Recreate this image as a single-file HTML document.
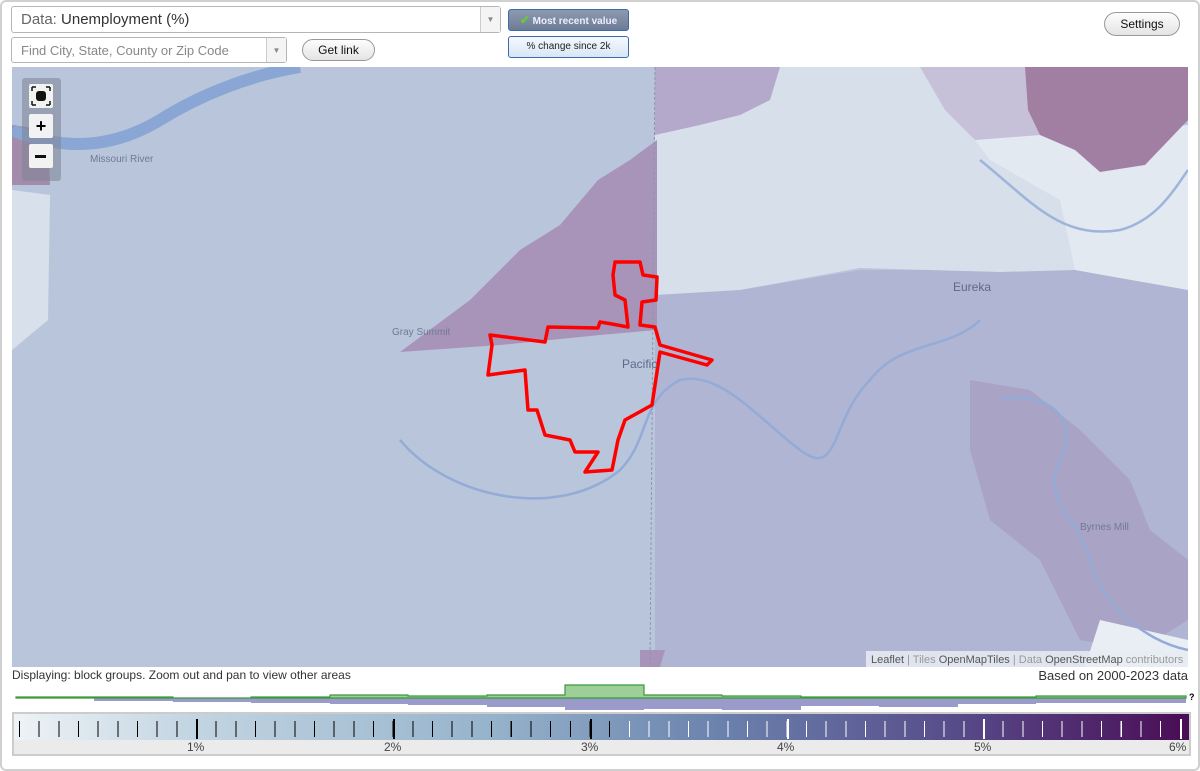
<!DOCTYPE html>
<html><head><meta charset="utf-8"><style>
*{box-sizing:border-box;margin:0;padding:0}
body{width:1200px;height:771px;background:#fff;font-family:"Liberation Sans",sans-serif;position:relative;overflow:hidden}
.frame{position:absolute;left:0;top:0;width:1200px;height:771px;border:2px solid #d0d0d0;border-radius:6px}
.sel{position:absolute;background:#fff;border:1px solid #b5b5b5;border-radius:3px;color:#333}
.arrow{position:absolute;right:0;top:0;bottom:0;width:20px;border-left:1px solid #ccc;background:#f4f4f4;color:#888;font-size:8px;text-align:center}
.btn{position:absolute;border:1px solid #999;border-radius:12px;background:linear-gradient(#fdfdfd,#e4e4e4);font-size:12px;text-align:center;color:#111}
.tab{position:absolute;border:1px solid #3d6aa8;border-radius:3px;font-size:10px;text-align:center}
</style></head><body>
<div class="frame"></div>
<div class="sel" style="left:11px;top:6px;width:490px;height:27px;font-size:15px;line-height:26px;padding-left:9px"><span style="color:#666">Data:</span> Unemployment (%)<div class="arrow" style="line-height:26px">▼</div></div>
<div class="sel" style="left:11px;top:37px;width:276px;height:26px;font-size:13px;line-height:25px;padding-left:9px;color:#888">Find City, State, County or Zip Code<div class="arrow" style="line-height:25px">▼</div></div>
<div class="btn" style="left:302px;top:39px;width:73px;height:22px;line-height:21px">Get link</div>
<div class="tab" style="left:508px;top:9px;width:121px;height:22px;line-height:20px;background:linear-gradient(#8d9ab0,#6d7c95);color:#eef;font-weight:bold"><span style="color:#6c3;font-size:12px">✔</span> Most recent value</div>
<div class="tab" style="left:508px;top:36px;width:121px;height:22px;line-height:20px;background:linear-gradient(#f4f8fd,#d8e6f6);color:#222">% change since 2k</div>
<div class="btn" style="left:1104px;top:12px;width:76px;height:24px;line-height:23px">Settings</div>

<svg style="position:absolute;left:12px;top:67px" width="1176" height="600" viewBox="12 67 1176 600">
<rect x="12" y="67" width="1176" height="600" fill="#b9c5da"/>
<polygon points="655,280 740,290 860,270 1075,270 1188,290 1188,667 655,667" fill="#b0b5d3"/>
<polygon points="970,380 1030,390 1080,430 1130,480 1150,530 1188,560 1188,620 1140,650 1080,640 1040,560 990,520 970,450" fill="#a9a3c5"/>
<polygon points="655,67 1020,67 1040,135 1075,160 1075,270 1000,272 860,268 740,290 655,295" fill="#d6dfea"/>
<polygon points="655,67 780,67 770,100 740,115 700,125 655,135" fill="#b4a9ca"/>
<polygon points="1040,135 1120,130 1188,125 1188,290 1075,270 1060,200 990,160 975,140" fill="#e3e9f1"/>
<polygon points="920,67 1025,67 1040,135 975,140 945,110" fill="#c6c1d8"/>
<polygon points="1025,67 1188,67 1188,120 1145,165 1100,172 1075,150 1040,135 1028,110" fill="#a07fa3"/>
<polygon points="400,352 470,300 520,250 560,225 598,180 630,160 657,140 657,330 600,335 500,345" fill="#a894b9"/>
<polygon points="12,190 50,195 48,320 12,350" fill="#d8e1eb"/>
<polygon points="12,125 48,130 50,185 12,185" fill="#a38cab"/>
<polygon points="1100,620 1188,640 1188,667 1085,667" fill="#e9eef4"/>
<polygon points="640,650 665,650 660,667 640,667" fill="#a894b9"/>
<path d="M12,130 C60,150 110,150 160,120 C200,95 250,75 300,67" stroke="#8aa6d4" stroke-width="12" fill="none"/>
<path d="M400,440 C450,500 560,520 620,470 C650,440 640,400 680,380 C720,370 760,420 800,450 C840,480 830,420 870,380 C900,340 950,350 980,320" stroke="#93abd6" stroke-width="2.5" fill="none"/>
<path d="M1000,400 C1050,390 1080,420 1060,460 C1040,500 1080,520 1090,560 C1100,600 1140,640 1188,650" stroke="#93abd6" stroke-width="2.5" fill="none"/>
<path d="M980,160 C1030,200 1060,240 1120,230 C1160,220 1180,180 1188,170" stroke="#9eb4da" stroke-width="2.5" fill="none"/>
<line x1="655" y1="67" x2="650" y2="667" stroke="#8c96b0" stroke-width="1" stroke-dasharray="3,2"/>
<polygon points="615,262 640,262 643,275 657,277 656,300 642,302 640,325 655,327 660,345 712,360 707,365 660,352 652,405 625,420 618,440 612,470 585,472 598,452 575,452 570,440 545,435 537,410 528,410 525,370 488,375 492,345 490,335 545,342 548,327 598,328 600,322 612,324 628,327 625,300 615,295 613,275" fill="none" stroke="#f00" stroke-width="3.5" stroke-linejoin="round"/>
<g font-family="Liberation Sans,sans-serif" fill="#6e7a95" font-size="10">
<text x="392" y="335">Gray Summit</text><text x="90" y="162">Missouri River</text><text x="1080" y="530">Byrnes Mill</text></g>
<g font-family="Liberation Sans,sans-serif" fill="#5c6a88" font-size="12"><text x="622" y="368">Pacific</text><text x="953" y="291">Eureka</text></g>
<rect x="22" y="78" width="39" height="103" rx="3" fill="#7d8494" opacity="0.55"/>
<rect x="29" y="84" width="24" height="24" rx="2" fill="#f2f2f2"/><rect x="36" y="91" width="10" height="10" rx="3" fill="#111"/>
<path d="M32,87 l4,0 M32,87 l0,4 M50,87 l-4,0 M50,87 l0,4 M32,105 l4,0 M32,105 l0,-4 M50,105 l-4,0 M50,105 l0,-4" stroke="#111" stroke-width="1.5"/>
<rect x="29" y="114" width="24" height="24" rx="2" fill="#f2f2f2"/><text x="41" y="132" text-anchor="middle" font-size="18" font-weight="bold" font-family="Liberation Sans">+</text>
<rect x="29" y="144" width="24" height="24" rx="2" fill="#f2f2f2"/><rect x="35" y="155" width="11" height="3" fill="#111"/>
<rect x="866" y="651" width="322" height="16" fill="#e8ecf2" opacity="0.85"/>
<text x="871" y="663" font-family="Liberation Sans" font-size="11" fill="#999"><tspan fill="#555">Leaflet</tspan> | Tiles <tspan fill="#555">OpenMapTiles</tspan> | Data <tspan fill="#555">OpenStreetMap</tspan> contributors</text>
</svg>
<div style="position:absolute;left:12px;top:668px;font-size:12px;color:#333">Displaying: block groups. Zoom out and pan to view other areas</div>
<div style="position:absolute;right:12px;top:668px;font-size:13px;color:#333">Based on 2000-2023 data</div>
<svg style="position:absolute;left:0;top:680px" width="1200" height="32" viewBox="0 680 1200 32">
<path d="M16,698 H94 V701 H173 V702 H251 V703 H330 V704 H408 V705 H487 V707 H565 V710 H644 V709 H722 V710 H801 V706 H879 V707 H958 V704 H1036 V703 H1115 V703 H1186 V698 Z" fill="#9b9bcb"/>
<path d="M16,697 H94 V697 H173 V698 H251 V697 H330 V695 H408 V696 H487 V695 H565 V685 H644 V695 H722 V696 H801 V697 H879 V697 H958 V697 H1036 V696 H1115 V696 H1186 V698 H16 Z" fill="#9fcf98" stroke="#3a9a3a" stroke-width="1.2"/>
<text x="1189" y="700" font-size="9" font-family="Liberation Sans" font-weight="bold">?</text>
</svg>
<div style="position:absolute;left:12px;top:712px;width:1179px;height:44px;border:2px solid #ccc;background:#ebebeb">
<div style="position:absolute;left:0;top:0;right:0;height:26px;background:linear-gradient(90deg,#eef3f6,#c3d5e2 15%,#97b4cc 40%,#6b82ad 60%,#574c8a 80%,#4a0c55)"></div>
<div style="position:absolute;left:5px;top:7px;width:596px;height:16px;background:repeating-linear-gradient(90deg,#000 0 1px,transparent 1px 19.67px)"></div>
<div style="position:absolute;left:615px;top:7px;width:560px;height:16px;background:repeating-linear-gradient(90deg,#fff 0 1px,transparent 1px 19.67px)"></div>
<div style="position:absolute;left:182px;top:5px;width:2px;height:20px;background:#000"></div>
<div style="position:absolute;left:379px;top:5px;width:2px;height:20px;background:#000"></div>
<div style="position:absolute;left:576px;top:5px;width:2px;height:20px;background:#000"></div>
<div style="position:absolute;left:773px;top:5px;width:2px;height:20px;background:#fff"></div>
<div style="position:absolute;left:969px;top:5px;width:2px;height:20px;background:#fff"></div>
<div style="position:absolute;left:1166px;top:5px;width:2px;height:20px;background:#fff"></div>
<div style="position:absolute;top:26px;left:0;right:0;font-size:12px;color:#444;line-height:14px">
<span style="position:absolute;left:173px">1%</span><span style="position:absolute;left:370px">2%</span><span style="position:absolute;left:567px">3%</span><span style="position:absolute;left:763px">4%</span><span style="position:absolute;left:960px">5%</span><span style="position:absolute;left:1155px">6%</span></div>
</div>
</body></html>
